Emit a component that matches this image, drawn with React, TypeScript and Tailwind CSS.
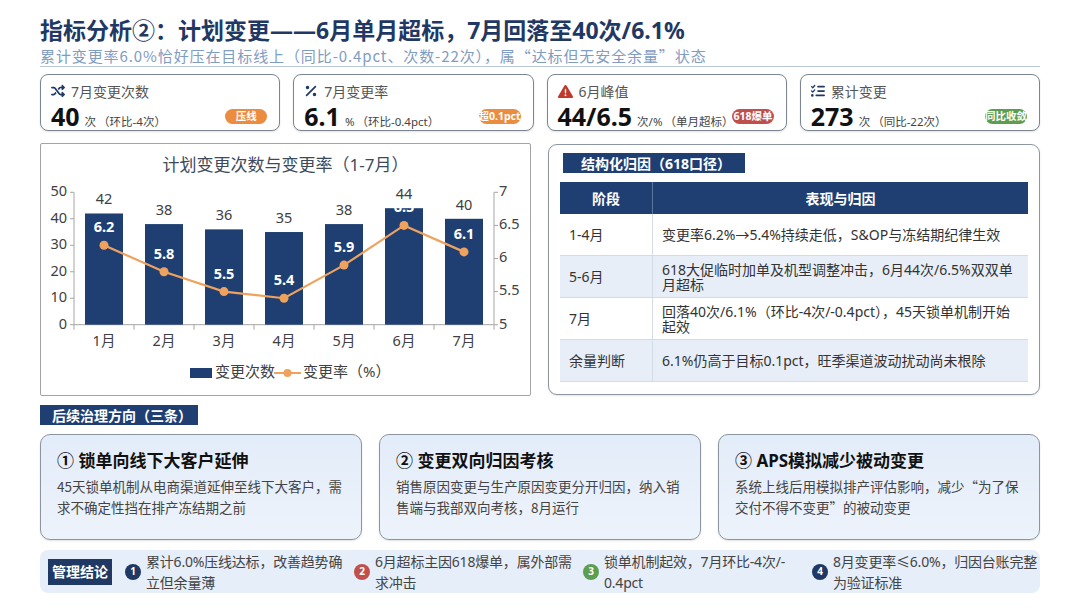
import { FaShuffle, FaPercent, FaTriangleExclamation, FaListCheck } from "react-icons/fa6";

const counts = [42, 38, 36, 35, 38, 44, 40];
const rates = [6.2, 5.8, 5.5, 5.4, 5.9, 6.5, 6.1];
const months = ["1月", "2月", "3月", "4月", "5月", "6月", "7月"];

// chart geometry (svg coords)
const X0 = 33;
const X1 = 453;
const CW = (X1 - X0) / 7;
const Y0 = 148.7;
const H = 132.4;
const yCount = (v: number) => Y0 - (v / 50) * H;
const yRate = (r: number) => Y0 - ((r - 5) / 2) * H;

type Kpi = {
  icon: React.ReactNode;
  label: string;
  value: string;
  unit: string;
  note: string;
  badge: string;
  badgeClass: string;
};

const kpis: Kpi[] = [
  {
    icon: <FaShuffle className="h-[14px] w-[14px] text-[#1f3864]" />,
    label: "7月变更次数",
    value: "40",
    unit: "次",
    note: "（环比-4次）",
    badge: "压线",
    badgeClass: "bg-[#ec8c3f]",
  },
  {
    icon: <FaPercent className="h-[14px] w-[14px] text-[#1f3864]" />,
    label: "7月变更率",
    value: "6.1",
    unit: "%",
    note: "（环比-0.4pct）",
    badge: "超0.1pct",
    badgeClass: "bg-[#ec8c3f]",
  },
  {
    icon: <FaTriangleExclamation className="h-[15px] w-[15px] text-[#c0392b]" />,
    label: "6月峰值",
    value: "44/6.5",
    unit: "次/%",
    note: "（单月超标）",
    badge: "618爆单",
    badgeClass: "bg-[#c0504d]",
  },
  {
    icon: <FaListCheck className="h-[14px] w-[14px] text-[#1f3864]" />,
    label: "累计变更",
    value: "273",
    unit: "次",
    note: "（同比-22次）",
    badge: "同比收敛",
    badgeClass: "bg-[#5c9e50]",
  },
];

const rows = [
  { stage: "1-4月", text: "变更率6.2%→5.4%持续走低，S&OP与冻结期纪律生效" },
  { stage: "5-6月", text: "618大促临时加单及机型调整冲击，6月44次/6.5%双双单月超标" },
  { stage: "7月", text: "回落40次/6.1%（环比-4次/-0.4pct），45天锁单机制开始起效" },
  { stage: "余量判断", text: "6.1%仍高于目标0.1pct，旺季渠道波动扰动尚未根除" },
];

const actions = [
  {
    title: "① 锁单向线下大客户延伸",
    body: "45天锁单机制从电商渠道延伸至线下大客户，需求不确定性挡在排产冻结期之前",
  },
  {
    title: "② 变更双向归因考核",
    body: "销售原因变更与生产原因变更分开归因，纳入销售端与我部双向考核，8月运行",
  },
  {
    title: "③ APS模拟减少被动变更",
    body: "系统上线后用模拟排产评估影响，减少“为了保交付不得不变更”的被动变更",
  },
];

const conclusions = [
  { n: "1", color: "bg-[#1f3864]", lines: ["累计6.0%压线达标，改善趋势确", "立但余量薄"] },
  { n: "2", color: "bg-[#c0504d]", lines: ["6月超标主因618爆单，属外部需", "求冲击"] },
  { n: "3", color: "bg-[#5c9e50]", lines: ["锁单机制起效，7月环比-4次/-", "0.4pct"] },
  { n: "4", color: "bg-[#1f3864]", lines: ["8月变更率≤6.0%，归因台账完整", "为验证标准"] },
];

function KpiCard({ k }: { k: Kpi }) {
  return (
    <div className="flex h-[57px] flex-col rounded-lg border border-[#7c8692] bg-white px-[10px] pt-[7px] shadow-[0_1px_2px_rgba(0,0,0,0.12)]">
      <div className="flex h-[18px] items-center gap-[6px] text-[14px] text-[#555]">
        {k.icon}
        <span>{k.label}</span>
      </div>
      <div className="mt-[3px] flex items-center justify-between">
        <div className="flex items-baseline">
          <span className="text-[25px] font-bold leading-[26px] text-[#111]">{k.value}</span>
          <span className="ml-[5px] text-[11.5px] text-[#444]">{k.unit}</span>
          <span className="ml-[2px] text-[11.5px] text-[#444]">{k.note}</span>
        </div>
        <span
          className={`mr-[2px] flex h-[15px] w-[42px] items-center justify-center overflow-visible whitespace-nowrap rounded-full text-[10.5px] font-bold text-white ${k.badgeClass}`}
        >
          {k.badge}
        </span>
      </div>
    </div>
  );
}

function Chart() {
  return (
    <div className="flex h-[253px] flex-col rounded-[2px] border border-[#a3a3a3] bg-white">
      <div className="pt-[10px] text-center text-[17px] leading-[22px] text-[#3c4a5c]">
        计划变更次数与变更率（1-7月）
      </div>
      <svg width="489" height="218" className="overflow-visible" fontSize="14.5">
        {/* axes */}
        <line x1={X0} y1={Y0} x2={X1} y2={Y0} stroke="#a6a6a6" />
        <line x1={X0} y1={Y0} x2={X0} y2={Y0 - H} stroke="#a6a6a6" />
        <line x1={X1} y1={Y0} x2={X1} y2={Y0 - H} stroke="#a6a6a6" />
        {[0, 10, 20, 30, 40, 50].map((v) => (
          <g key={v}>
            <line x1={X0 - 4} y1={yCount(v)} x2={X0} y2={yCount(v)} stroke="#a6a6a6" />
            <text x={26} y={yCount(v)} textAnchor="end" dominantBaseline="middle" fill="#404040">
              {v}
            </text>
          </g>
        ))}
        {[5, 5.5, 6, 6.5, 7].map((v) => (
          <g key={v}>
            <line x1={X1} y1={yRate(v)} x2={X1 + 4} y2={yRate(v)} stroke="#a6a6a6" />
            <text x={458} y={yRate(v)} dominantBaseline="middle" fill="#404040">
              {v}
            </text>
          </g>
        ))}
        {months.map((m, i) => (
          <g key={m}>
            <line x1={X0 + CW * i} y1={Y0} x2={X0 + CW * i} y2={Y0 + 5} stroke="#a6a6a6" />
            <text x={X0 + CW * i + CW / 2} y={166} textAnchor="middle" dominantBaseline="middle" fill="#404040">
              {m}
            </text>
          </g>
        ))}
        <line x1={X1} y1={Y0} x2={X1} y2={Y0 + 5} stroke="#a6a6a6" />
        {/* bars */}
        {counts.map((c, i) => (
          <g key={i}>
            <rect x={X0 + CW * i + 11} y={yCount(c)} width={38} height={Y0 - yCount(c)} fill="#1f3f73" />
            <text x={X0 + CW * i + CW / 2} y={yCount(c) - 9} textAnchor="middle" fill="#404040">
              {c}
            </text>
          </g>
        ))}
        {/* rate line */}
        <polyline
          points={rates.map((r, i) => `${X0 + CW * i + CW / 2},${yRate(r)}`).join(" ")}
          fill="none"
          stroke="#eea25e"
          strokeWidth="2.2"
        />
        {rates.map((r, i) => (
          <g key={i}>
            <circle cx={X0 + CW * i + CW / 2} cy={yRate(r)} r="4.5" fill="#eea25e" />
            <text
              x={X0 + CW * i + CW / 2}
              y={yRate(r) - 13}
              textAnchor="middle"
              fill="#ffffff"
              fontWeight="bold"
            >
              {r}
            </text>
          </g>
        ))}
        {/* legend */}
        <rect x={149} y={192} width={22} height={10} fill="#1f3f73" />
        <text x={174} y={197} dominantBaseline="middle" fill="#404040" fontSize="15">
          变更次数
        </text>
        <line x1={233} y1={197} x2={260} y2={197} stroke="#eea25e" strokeWidth="2" />
        <circle cx={246.5} cy={197} r="4" fill="#eea25e" />
        <text x={262} y={197} dominantBaseline="middle" fill="#404040" fontSize="15">
          变更率（%）
        </text>
      </svg>
    </div>
  );
}

function Attribution() {
  return (
    <div className="flex h-[251px] flex-col rounded-[9px] border border-[#8b96a2] bg-white px-[11px] pt-[8px] shadow-[0_1px_2px_rgba(0,0,0,0.1)]">
      <div className="ml-[3px] flex h-[20px] w-[182px] items-center bg-[#1f3f73] pl-[18px] text-[14px] font-bold text-white">
        结构化归因（618口径）
      </div>
      <div className="mt-[9px] grid grid-cols-[93px_1fr] text-[14px]">
        <div className="flex h-[32px] items-center justify-center border-r border-[#5d7599] bg-[#1f3f73] font-bold text-white">
          阶段
        </div>
        <div className="flex h-[32px] items-center justify-center bg-[#1f3f73] font-bold text-white">
          表现与归因
        </div>
        {rows.map((r, i) => (
          <div key={r.stage} className="contents">
            <div
              className={`flex h-[42px] items-center border-b border-r border-[#d3dbe6] pl-[9px] text-[#333] ${
                i % 2 === 1 ? "bg-[#e8eef8]" : "bg-white"
              }`}
            >
              {r.stage}
            </div>
            <div
              className={`flex h-[42px] items-center border-b border-[#d3dbe6] px-[9px] leading-[15px] text-[#333] ${
                i % 2 === 1 ? "bg-[#e8eef8]" : "bg-white"
              }`}
            >
              {r.text}
            </div>
          </div>
        ))}
      </div>
    </div>
  );
}

export default function App() {
  return (
    <div className="h-[608px] w-[1080px] overflow-hidden bg-white px-[40px] pt-[16px] font-['Noto_Sans','Noto_Sans_CJK_SC',sans-serif]">
      {/* header */}
      <div className="border-b border-[#b9c6d6]">
        <h1 className="text-[23px] font-bold leading-[28px] text-[#1f3864]">
          指标分析②：计划变更——6月单月超标，7月回落至40次/6.1%
        </h1>
        <p className="mt-[1px] font-['Noto_Sans_CJK_SC',sans-serif] text-[15px] leading-[21px] tracking-[0.9px] text-[#7f9cc2]">
          累计变更率6.0%恰好压在目标线上（同比-0.4pct、次数-22次），属“达标但无安全余量”状态
        </p>
      </div>

      {/* KPI cards */}
      <div className="mt-[7px] grid grid-cols-4 gap-[13px]">
        {kpis.map((k) => (
          <KpiCard key={k.label} k={k} />
        ))}
      </div>

      {/* chart + attribution */}
      <div className="mt-[12px] grid grid-cols-[491px_1fr] gap-[17px]">
        <Chart />
        <div className="pt-[1px]">
          <Attribution />
        </div>
      </div>

      {/* actions */}
      <div className="mt-[9px] flex h-[20px] w-[158px] items-center bg-[#1f3f73] pl-[12px] text-[14px] font-bold text-white">
        后续治理方向（三条）
      </div>
      <div className="mt-[9px] grid grid-cols-3 gap-[17px]">
        {actions.map((a) => (
          <div
            key={a.title}
            className="h-[106px] rounded-[10px] border border-[#8a95a1] bg-gradient-to-b from-[#e3ecf9] to-[#edf3fb] px-[16px] pt-[14px] shadow-[0_1px_2px_rgba(0,0,0,0.12)]"
          >
            <div className="text-[17px] font-bold leading-[24px] text-[#111]">{a.title}</div>
            <div className="mt-[3px] font-['Noto_Sans_CJK_SC',sans-serif] text-[13.5px] leading-[21px] text-[#444]">
              {a.body}
            </div>
          </div>
        ))}
      </div>

      {/* conclusion */}
      <div className="mt-[10px] flex h-[43px] items-center rounded-lg bg-[#e6eef9] pl-[8px]">
        <div className="flex h-[26px] w-[64px] shrink-0 items-center justify-center bg-[#1f3864] text-[14px] font-bold text-white">
          管理结论
        </div>
        <div className="ml-[13px] grid flex-1 grid-cols-[229px_229px_229px_1fr]">
          {conclusions.map((c) => (
            <div key={c.n} className="flex items-center gap-[5px]">
              <span
                className={`flex h-[16px] w-[16px] shrink-0 items-center justify-center rounded-full text-[10px] font-bold text-white ${c.color}`}
              >
                {c.n}
              </span>
              <span className="whitespace-nowrap text-[14px] leading-[21px] tracking-[-0.2px] text-[#444]">
                {c.lines[0]}
                <br />
                {c.lines[1]}
              </span>
            </div>
          ))}
        </div>
      </div>
    </div>
  );
}
